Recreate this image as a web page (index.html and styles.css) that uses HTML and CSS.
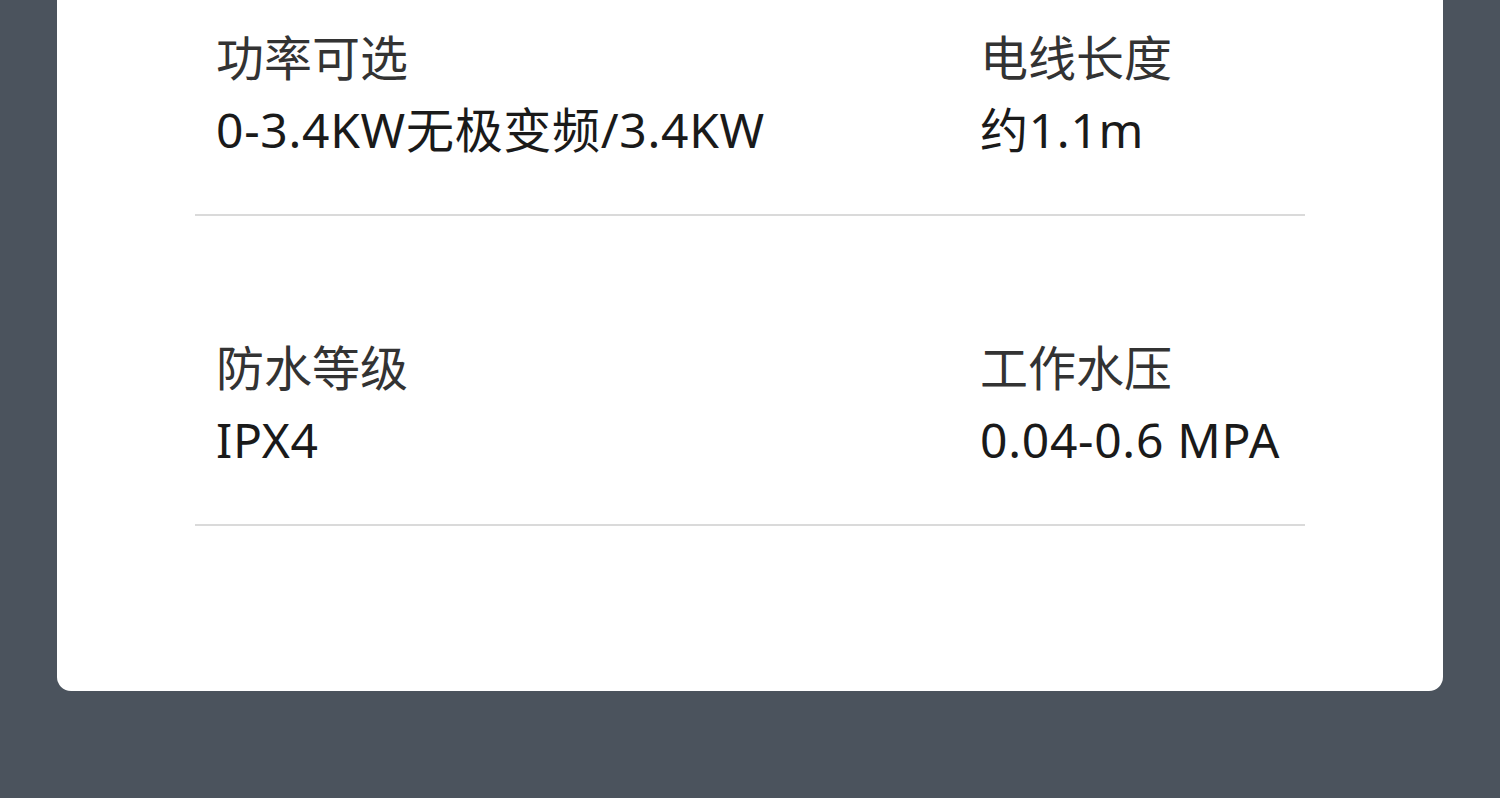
FILE: index.html
```html
<!DOCTYPE html>
<html lang="zh-CN">
<head>
  <meta charset="UTF-8">
  <title>产品参数</title>
  <meta name="viewport" content="width=device-width, initial-scale=1.0">
  <link rel="stylesheet" href="styles.css">
</head>
<body>

  <section class="spec-card">
    <div class="spec-row">
      <div class="spec-item">
        <p class="spec-label">功率可选</p>
        <p class="spec-value">0-3.4KW无极变频/3.4KW</p>
      </div>
      <div class="spec-item">
        <p class="spec-label">电线长度</p>
        <p class="spec-value">约1.1m</p>
      </div>
    </div>
    <div class="spec-row">
      <div class="spec-item">
        <p class="spec-label">防水等级</p>
        <p class="spec-value">IPX4</p>
      </div>
      <div class="spec-item">
        <p class="spec-label">工作水压</p>
        <p class="spec-value">0.04-0.6 MPA</p>
      </div>
    </div>
  </section>

</body>
</html>
```

FILE: styles.css
```css
* {
  box-sizing: border-box;
  margin: 0;
  padding: 0;
}

body {
  font-family: "Noto Sans", "Noto Sans CJK SC", sans-serif;
  background-color: #4b535d;
  color: #333;
  height: 798px;
  overflow: hidden;
}

.spec-card {
  background: #fff;
  margin: -94px 57px 0;
  padding: 0 138px 165px;
  border-radius: 0 0 14px 14px;
}

.spec-row {
  display: grid;
  grid-template-columns: 764px 1fr;
  padding: 116px 21px 48px;
  border-bottom: 2px solid #dadada;
}

.spec-label,
.spec-value {
  font-size: 48px;
  line-height: 72px;
  white-space: nowrap;
}

.spec-label {
  color: #333;
}

.spec-value {
  color: #1a1a1a;
  letter-spacing: 0.7px;
}
```
